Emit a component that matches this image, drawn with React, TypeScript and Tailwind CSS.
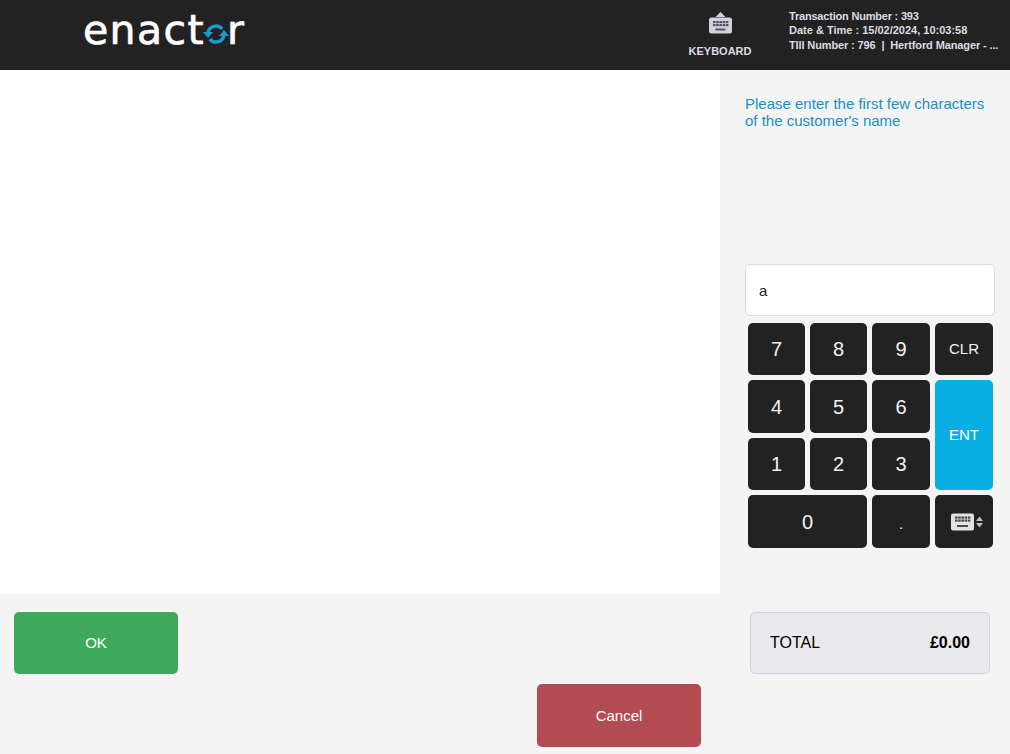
const keyButton =
  "flex items-center justify-center rounded-[5px] bg-[#222222] text-[#f2f2f2]";

function EnactorLogo() {
  return (
    <div className="mb-[9px] ml-[-1px] flex items-end font-['DejaVu_Sans',sans-serif] text-[41px] leading-[45px] tracking-[1.4px] text-white [-webkit-text-stroke:0.7px_white]">
      <span>enact</span>
      <svg className="mb-[8px] ml-[-2px]" width="26" height="22" viewBox="0 0 26 22" fill="none">
        <path d="M5 10 A8 8 0 0 1 19.1 5.9" stroke="#1c9ad0" strokeWidth="3.5" />
        <path d="M21 12 A8 8 0 0 1 6.9 16.1" stroke="#1c9ad0" strokeWidth="3.5" />
        <path d="M0 9 L10 9 L5 15 Z" fill="#1c9ad0" />
        <path d="M16 13 L26 13 L21 7 Z" fill="#1c9ad0" />
      </svg>
      <span className="ml-[-2px]">r</span>
    </div>
  );
}

function KeyboardKeys({ x, y, color }: { x: number; y: number; color: string }) {
  // two rows of small keys, the space bar is drawn by the caller
  const keys = [];
  for (let row = 0; row < 2; row++) {
    for (let col = 0; col < 5; col++) {
      keys.push(<rect key={`${row}-${col}`} x={x + col * 3.2} y={y + row * 3} width="2.6" height="2.2" fill={color} />);
    }
  }
  return <g>{keys}</g>;
}

function HeaderKeyboardIcon() {
  return (
    <svg width="23" height="22" viewBox="0 0 23 22">
      <path d="M11.5 0 L16.5 5 L6.5 5 Z" fill="#d2d2de" />
      <rect x="0" y="5.5" width="23" height="16" rx="2.5" fill="#d2d2de" />
      <KeyboardKeys x={4} y={9} color="#55555c" />
      <rect x="6.5" y="16.5" width="10" height="2" fill="#55555c" />
    </svg>
  );
}

function KeypadKeyboardIcon() {
  return (
    <svg width="33" height="18" viewBox="0 0 33 18">
      <rect x="0" y="0.5" width="23" height="17" rx="2" fill="#e2e2e2" />
      <KeyboardKeys x={4} y={3.5} color="#4a4a4a" />
      <rect x="6" y="12" width="11" height="2" fill="#4a4a4a" />
      <path d="M28.5 3.5 L32 8 L25 8 Z" fill="#bdbdbd" />
      <path d="M28.5 14.5 L32 10 L25 10 Z" fill="#bdbdbd" />
    </svg>
  );
}

export default function App() {
  return (
    <div className="flex h-[754px] w-[1010px] flex-col overflow-hidden bg-[#f4f4f4] font-['Liberation_Sans',Arial,sans-serif]">
      {/* header */}
      <header className="flex h-[70px] items-center bg-[#222222] pr-[10px] pl-[84px]">
        <EnactorLogo />
        <div className="ml-auto flex w-[62px] flex-col items-center">
          <HeaderKeyboardIcon />
          <span className="mt-[11px] text-[11px] leading-[13px] font-bold text-[#dcdce2]">KEYBOARD</span>
        </div>
        <div className="ml-[38px] w-[211px] pb-[9px] text-[11px] leading-[14.5px] font-bold whitespace-nowrap text-[#dcdce2]">
          <div className="tracking-[-0.2px]">Transaction Number : 393</div>
          <div>Date &amp; Time : 15/02/2024, 10:03:58</div>
          <div className="tracking-[-0.12px]">TIll Number : 796 &nbsp;|&nbsp; Hertford Manager - ...</div>
        </div>
      </header>

      {/* main area */}
      <div className="flex h-[524px]">
        <main className="w-[720px] bg-white" />
        <aside className="flex flex-1 flex-col pr-[15px] pl-[25px]">
          <p className="mt-[25px] h-[169px] text-[15px] leading-[17px] text-[#1b8fc2]">
            Please enter the first few characters of the customer's name
          </p>
          <div className="flex h-[52px] items-center rounded-[5px] border border-[#d9d9e2] bg-white pt-[2px] pl-[13px] text-[15px] text-[#222222]">
            a
          </div>
          <div className="mt-[7px] ml-[3px] grid grid-cols-[57px_57px_58px_58px] grid-rows-[52px_53px_52px_53px] gap-[5px] text-[20px]">
            <div className={keyButton}>7</div>
            <div className={keyButton}>8</div>
            <div className={keyButton}>9</div>
            <div className={`${keyButton} text-[15px]`}>CLR</div>
            <div className={keyButton}>4</div>
            <div className={keyButton}>5</div>
            <div className={keyButton}>6</div>
            <div className="row-span-2 flex items-center justify-center rounded-[5px] bg-[#08aee3] text-[15px] text-white">
              ENT
            </div>
            <div className={keyButton}>1</div>
            <div className={keyButton}>2</div>
            <div className={keyButton}>3</div>
            <div className={`${keyButton} col-span-2`}>0</div>
            <div className={`${keyButton} pt-[6px] text-[15px]`}>.</div>
            <div className={`${keyButton} pl-[6px]`}>
              <KeypadKeyboardIcon />
            </div>
          </div>
        </aside>
      </div>

      {/* bottom actions */}
      <div className="flex flex-1">
        <div className="w-[720px] pt-[18px]">
          <button className="ml-[14px] block h-[62px] w-[164px] rounded-[5px] bg-[#3fa95b] text-[15px] text-white">
            OK
          </button>
          <button className="mt-[10px] ml-[537px] block h-[63px] w-[164px] rounded-[5px] bg-[#b34b52] pt-[2px] text-[15px] text-white">
            Cancel
          </button>
        </div>
        <div className="pt-[18px] pl-[30px]">
          <div className="flex h-[62px] w-[240px] items-center justify-between rounded-[5px] border border-[#d0d0dc] bg-[#e9e9ee] px-[19px] text-[16px] text-black">
            <span>TOTAL</span>
            <span className="font-bold">£0.00</span>
          </div>
        </div>
      </div>
    </div>
  );
}
